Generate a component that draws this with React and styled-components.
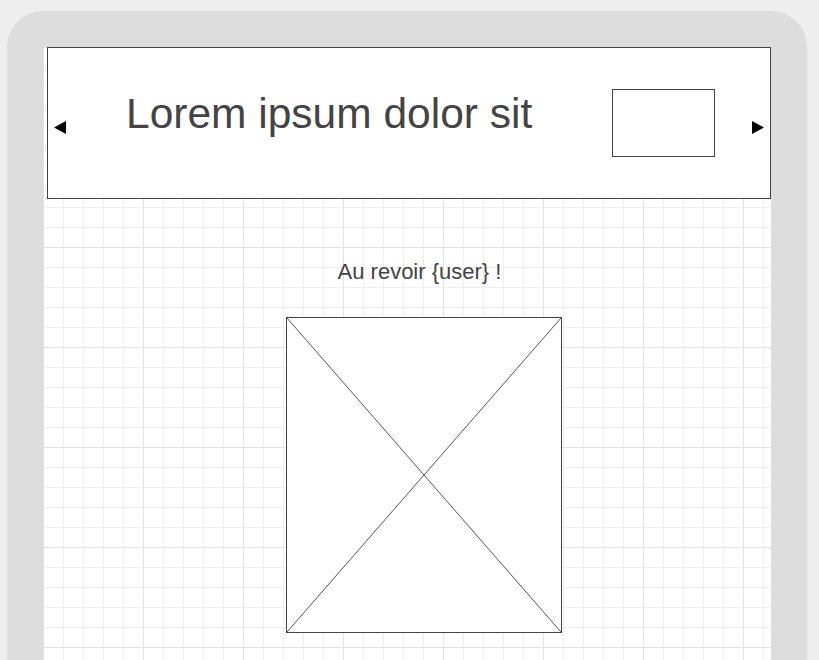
import styled, { createGlobalStyle } from 'styled-components';

const GlobalStyle = createGlobalStyle`
  html, body {
    margin: 0;
    padding: 0;
    background: #eeeeee;
    overflow: hidden;
  }
  body {
    font-family: "Liberation Sans", Arial, sans-serif;
  }
`;

const Device = styled.div`
  margin: 11px 0 0 7px;
  width: 800px;
  height: calc(100vh - 11px);
  box-sizing: border-box;
  padding: 36px 36px 0;
  background: #dddddd;
  border-radius: 36px 36px 0 0;
`;

const Screen = styled.div`
  width: 728px;
  height: 100%;
  background-color: #ffffff;
  background-image:
    linear-gradient(to right, #e2e2e2 1px, transparent 1px),
    linear-gradient(to bottom, #e2e2e2 1px, transparent 1px),
    linear-gradient(to right, #efefef 1px, transparent 1px),
    linear-gradient(to bottom, #efefef 1px, transparent 1px);
  background-size: 100px 100px, 100px 100px, 20px 20px, 20px 20px;
  display: flex;
  flex-direction: column;
  overflow: hidden;
`;

const Header = styled.header`
  margin-left: 4px;
  width: 724px;
  height: 152px;
  box-sizing: border-box;
  border: 1px solid #444444;
  background: #ffffff;
  display: flex;
  align-items: center;
  padding: 0 6px;
  flex: none;
`;

const Arrow = styled.svg`
  width: 12px;
  height: 13px;
  margin-top: 9px;
  flex: none;
  margin-left: ${p => p.$gap || 0}px;
`;

const Title = styled.h1`
  align-self: flex-start;
  margin: 42px 0 0 60px;
  font-size: 42.5px;
  line-height: 48px;
  font-weight: 400;
  color: #444444;
  white-space: nowrap;
`;

const Thumb = styled.div`
  margin-left: auto;
  width: 103px;
  height: 68px;
  box-sizing: border-box;
  border: 1px solid #444444;
  background: #ffffff;
  flex: none;
`;

const Farewell = styled.p`
  margin: 60px 0 0;
  padding-left: 25px;
  text-align: center;
  font-size: 22px;
  line-height: 26px;
  color: #444444;
`;

const ImageBox = styled.div`
  margin: 32px 0 0 243px;
  width: 276px;
  height: 316px;
  box-sizing: border-box;
  border: 1px solid #444444;
  background: #ffffff;
  flex: none;

  svg {
    display: block;
    width: 100%;
    height: 100%;
  }
`;

function Triangle({ dir, gap }) {
  const points = dir === 'left' ? '12,0 12,13 0,6.5' : '0,0 0,13 12,6.5';
  return (
    <Arrow viewBox="0 0 12 13" $gap={gap}>
      <polygon points={points} fill="#000" />
    </Arrow>
  );
}

export default function App() {
  return (
    <>
      <GlobalStyle />
      <Device>
        <Screen>
          <Header>
            <Triangle dir="left" />
            <Title>Lorem ipsum dolor sit</Title>
            <Thumb />
            <Triangle dir="right" gap={37} />
          </Header>
          <Farewell>Au revoir {'{user}'} !</Farewell>
          <ImageBox>
            <svg viewBox="0 0 100 100" preserveAspectRatio="none">
              <line x1="0" y1="0" x2="100" y2="100" stroke="#555" strokeWidth="1" vectorEffect="non-scaling-stroke" />
              <line x1="100" y1="0" x2="0" y2="100" stroke="#555" strokeWidth="1" vectorEffect="non-scaling-stroke" />
            </svg>
          </ImageBox>
        </Screen>
      </Device>
    </>
  );
}
